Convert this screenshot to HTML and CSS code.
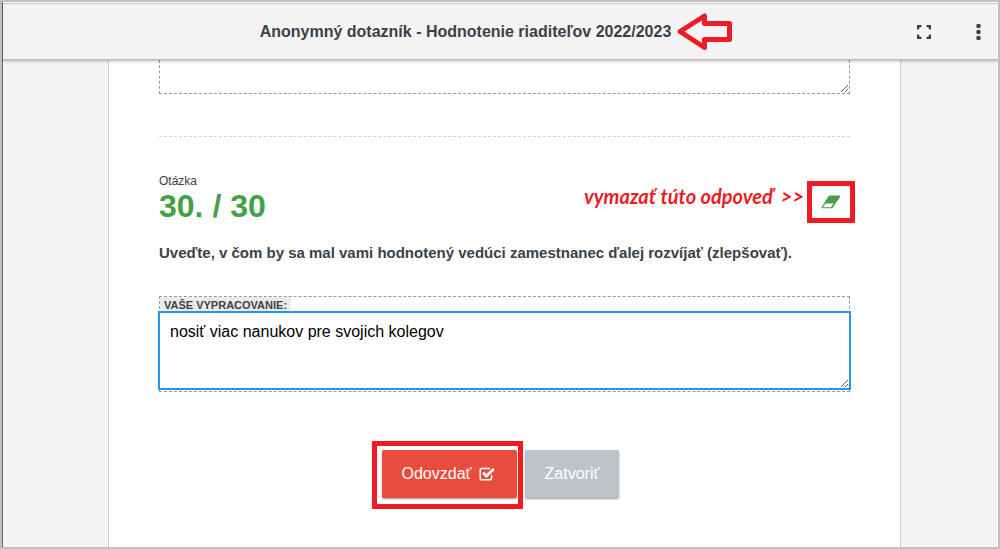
FILE: index.html
```html
<!DOCTYPE html>
<html lang="sk">
<head>
    <meta charset="UTF-8">
    <meta name="viewport" content="width=device-width, initial-scale=1.0">
    <title>Anonymný dotazník</title>
    <link rel="stylesheet" href="styles.css">
</head>
<body>
    <div class="frame">
        <header class="topbar">
            <h1 class="topbar-title">
                <span class="title-text">Anonymný dotazník - Hodnotenie riaditeľov 2022/2023
                    <svg class="arrow" width="56" height="38" viewBox="0 0 56 38" aria-hidden="true">
                        <path d="M3 18.500 L27.500 3 V10.500 H52.500 V26.500 H27.500 V34.500 Z" fill="none" stroke="#ed1c24" stroke-width="5" stroke-linejoin="round"/>
                    </svg>
                </span>
            </h1>
            <div class="topbar-actions">
                <button class="icon-button" type="button" aria-label="Celá obrazovka">
                    <svg width="24" height="24" viewBox="0 0 24 24" aria-hidden="true">
                        <path d="M7.200 14.500H5v4.500h4.500v-2.200H7.200zM5 9.500h2.200V7.200h2.300V5H5zM16.800 16.800h-2.300V19H19v-4.500h-2.200zM14.500 5v2.200h2.300v2.300H19V5z" fill="#3a4149"/>
                    </svg>
                </button>
                <button class="icon-button" type="button" aria-label="Menu">
                    <svg width="24" height="24" viewBox="0 0 24 24" aria-hidden="true" fill="#3a4149">
                        <circle cx="12.500" cy="6" r="2.300"/>
                        <circle cx="12.500" cy="12" r="2.300"/>
                        <circle cx="12.500" cy="18" r="2.300"/>
                    </svg>
                </button>
            </div>
        </header>

        <main class="content">
            <form class="paper">
                <textarea class="prev-answer" aria-label="Predchádzajúca odpoveď"></textarea>

                <section class="question">
                    <div class="question-head">
                        <div>
                            <div class="question-label">Otázka</div>
                            <h2 class="question-number">30. / 30</h2>
                        </div>
                        <div class="erase">
                            <span class="note">vymazať túto odpoveď</span>
                            <span class="note">&gt;&gt;</span>
                            <button class="erase-button marked" type="button" aria-label="Vymazať">
                                <svg width="20" height="14" viewBox="0 0 20 14" aria-hidden="true">
                                    <path d="M8.500 0.500 H18.600 Q19.800 0.500 19.200 1.800 L11.800 12.400 Q11.200 13.300 10 13.300 H1.200 Q0 13.300 0.700 12 L7.400 1.200 Q7.800 0.500 8.500 0.500 Z" fill="#43a047"/>
                                    <path d="M4.500 8.500 H12.500 L10 12.200 H1.900 Z" fill="#fff"/>
                                </svg>
                            </button>
                        </div>
                    </div>

                    <p class="question-text">Uveďte, v čom by sa mal vami hodnotený vedúci zamestnanec ďalej rozvíjať (zlepšovať).</p>

                    <div class="answer">
                        <label class="answer-label" for="answer">VAŠE VYPRACOVANIE:</label>
                        <textarea class="answer-text" id="answer">nosiť viac nanukov pre svojich kolegov</textarea>
                    </div>
                </section>

                <div class="buttons">
                    <button class="button submit marked" type="button">
                        Odovzdať
                        <svg width="18" height="14" viewBox="0 0 18 14" aria-hidden="true" fill="none" stroke="#fff">
                            <path d="M12.600 8.200 V11 Q12.600 12.800 10.800 12.800 H3 Q1.200 12.800 1.200 11 V3.200 Q1.200 1.400 3 1.400 H11" stroke-width="1.500"/>
                            <path d="M4 5.500 L7.400 9 L14.800 2" stroke-width="2.800"/>
                        </svg>
                    </button>
                    <button class="button close" type="button">Zatvoriť</button>
                </div>
            </form>
        </main>
    </div>
</body>
</html>
```
FILE: styles.css
```css
* {
    box-sizing: border-box;
}

body {
    margin: 0;
    background: #f4f4f4;
    color: #3a4149;
    font-family: "Liberation Sans", Arial, sans-serif;
}

.frame {
    display: flex;
    flex-direction: column;
    height: 100vh;
    border: 2px solid #c0c0c0;
    box-shadow: inset 1px 0 #666;
    padding-left: 1px;
    overflow: hidden;
}

/* top bar */
.topbar {
    display: flex;
    align-items: center;
    flex: none;
    height: 57px;
    margin-top: 1px;
    padding-left: 24px;
    background: #f4f4f4;
    border-top: 1px solid #c8c8c8;
    border-bottom: 1px solid #bbb;
    box-shadow: 0 -1px #fff, 0 1px 3px rgba(0, 0, 0, 0.3);
    position: relative;
    z-index: 1;
}

.topbar-title {
    flex: 1;
    margin: 0;
    font-size: 16px;
    line-height: 20px;
    text-align: center;
}

.title-text {
    position: relative;
}

.arrow {
    position: absolute;
    left: 100%;
    top: -10px;
    margin-left: 6px;
}

.topbar-actions {
    display: flex;
    gap: 14px;
}

.icon-button {
    display: flex;
    align-items: center;
    justify-content: center;
    width: 40px;
    height: 40px;
    padding: 0;
    border: 0;
    background: none;
}

/* page */
.content {
    display: flex;
    flex: 1;
    justify-content: center;
    padding-left: 8px;
    min-height: 0;
}

.paper {
    width: 100%;
    max-width: 793px;
    padding: 0 50px;
    background: #fff;
    border: 1px solid #d3d3d3;
    border-width: 0 1px;
}

.prev-answer {
    display: block;
    width: 100%;
    height: 34px;
    border: 1px dashed #999;
    border-top: 0;
    outline: 0;
    background: #fff;
}

.question {
    margin-top: 42px;
    padding-top: 36px;
    border-top: 1px dashed #d3d3d3;
}

.question-head {
    display: flex;
    justify-content: space-between;
}

.question-label {
    font-size: 12px;
    line-height: 16px;
}

.question-number {
    margin: 0;
    color: #43a047;
    font-size: 32px;
    line-height: 34px;
}

.erase {
    display: flex;
    align-items: center;
    gap: 8px;
    height: 60px;
    margin-top: -1px;
}

.note {
    color: #ed1c24;
    font-family: "Segoe Print", Lato, cursive;
    font-size: 20px;
    font-style: italic;
    font-weight: bold;
    padding-bottom: 12px;
}

.erase-button {
    display: flex;
    align-items: center;
    justify-content: center;
    width: 38px;
    height: 32px;
    padding: 0;
    border: 0;
    background: none;
}

.marked {
    position: relative;
}

.marked::after {
    content: "";
    position: absolute;
    border: 5px solid #ed1c24;
    pointer-events: none;
}

.erase-button::after {
    inset: -5px;
}

.question-text {
    margin: 11px 0 33px;
    font-size: 15px;
    font-weight: bold;
    line-height: 20px;
}

.answer {
    border: 1px dashed #999;
    padding-bottom: 3px;
}

.answer-label {
    display: block;
    width: fit-content;
    padding: 0 4px;
    background: #ebebec;
    font-size: 11px;
    font-weight: bold;
    line-height: 16px;
}

.answer-text {
    display: block;
    width: 100%;
    height: 75px;
    padding: 9px 10px;
    border: 0;
    outline: 2px solid #2196f3;
    background: #fff;
    color: #000;
    font-family: inherit;
    font-size: 16px;
    line-height: 20px;
}

/* buttons */
.buttons {
    display: flex;
    justify-content: center;
    margin-top: 58px;
}

.button {
    display: flex;
    align-items: center;
    gap: 7px;
    height: 48px;
    margin-right: 8px;
    padding: 0 20px;
    border: 0;
    border-radius: 2px;
    box-shadow: 0 1px 2px rgba(0, 0, 0, 0.4);
    color: #fff;
    font-family: inherit;
    font-size: 16px;
}

.submit {
    background: #e84c3d;
}

.submit::after {
    inset: -9px -6px -11px -10px;
}

.close {
    background: #bdc3c7;
}
```
